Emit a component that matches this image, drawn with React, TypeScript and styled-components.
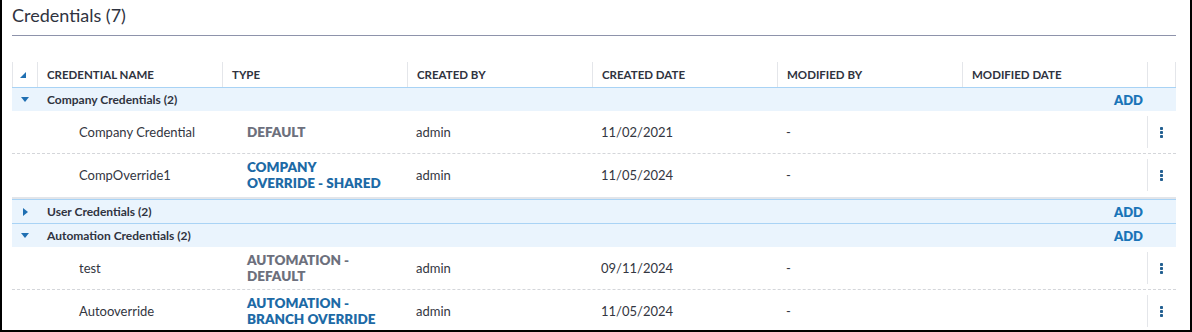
import React from "react";
import styled, { createGlobalStyle } from "styled-components";

const GlobalStyle = createGlobalStyle`
  html, body {
    margin: 0;
    padding: 0;
    background: #ffffff;
  }
  body {
    font-family: Lato, "Open Sans", Arial, sans-serif;
    color: #333641;
  }
`;

const COLS = "25px repeat(6, 185px) 1fr";

const Panel = styled.div`
  width: 1192px;
  height: 332px;
  box-sizing: border-box;
  border-left: 2px solid #000;
  border-right: 2px solid #000;
  border-bottom: 2px solid #000;
  padding: 0 14px 0 10px;
  overflow: hidden;
`;

const TitleBar = styled.div`
  height: 36px;
  box-sizing: border-box;
  border-bottom: 1px solid #8e93ab;
  display: flex;
  align-items: flex-start;
`;

const Title = styled.h2`
  margin: 3px 0 0 0;
  font-size: 18px;
  line-height: 24px;
  font-weight: 400;
  color: #2f3340;
`;

const Table = styled.div`
  margin-top: 26px;
`;

const HeaderRow = styled.div`
  display: grid;
  grid-template-columns: ${COLS};
  height: 25px;
`;

const HeaderCell = styled.div<{ $last?: boolean }>`
  display: flex;
  align-items: center;
  padding-left: 9px;
  font-size: 11.5px;
  font-weight: 700;
  text-transform: uppercase;
  color: #2f3340;
  border-left: 1px solid #e4e6ea;
  ${(p) => (p.$last ? "border-right: 1px solid #e4e6ea;" : "")}
`;

const SortCell = styled(HeaderCell)`
  padding-left: 7px;
`;

const GroupRow = styled.div`
  display: grid;
  grid-template-columns: 25px 1fr auto;
  height: 23px;
  background: #eaf4fd;
  border-top: 1px solid #a9d3f5;
  align-items: center;
`;

const Toggle = styled.div`
  display: flex;
  align-items: center;
  justify-content: center;
  padding-left: 1px;
`;

const GroupLabel = styled.div`
  padding-left: 10px;
  font-size: 12px;
  font-weight: 700;
  color: #2f3340;
`;

const AddButton = styled.button`
  background: none;
  border: none;
  padding: 0 33px 0 0;
  font-family: inherit;
  font-size: 13px;
  font-weight: 800;
  color: #1a74b8;
  cursor: pointer;
`;

const GroupBody = styled.div`
  padding-bottom: 1px;
  border-bottom: 2px solid #e2e5ea;
`;

const DataRow = styled.div<{ $last?: boolean }>`
  display: grid;
  grid-template-columns: ${COLS};
  height: 42px;
  border-bottom: ${(p) => (p.$last ? "none" : "1px dashed #d4d6da")};
  align-items: center;
`;

const Cell = styled.div<{ $pad?: number }>`
  padding-left: ${(p) => p.$pad ?? 9}px;
  font-size: 13px;
  color: #333641;
`;

const TypeCell = styled.div<{ $tone: "grey" | "blue" }>`
  padding-left: 25px;
  font-size: 13.5px;
  line-height: 16px;
  font-weight: 800;
  text-transform: uppercase;
  color: ${(p) => (p.$tone === "blue" ? "#1d6aa6" : "#6d707d")};
`;

const ActionCell = styled.div`
  align-self: stretch;
  margin: 5px 0;
  border-left: 1px solid #e4e6ea;
  display: flex;
  align-items: center;
  justify-content: center;
  padding-right: 1px;
`;

const SortIcon = () => (
  <svg width="6" height="6" viewBox="0 0 6 6">
    <polygon points="6,0 6,6 0,6" fill="#1f6fb2" />
  </svg>
);

const Caret = ({ open }: { open: boolean }) =>
  open ? (
    <svg width="8" height="5" viewBox="0 0 8 5">
      <polygon points="0,0 8,0 4,5" fill="#1f6fb2" />
    </svg>
  ) : (
    <svg width="5" height="8" viewBox="0 0 5 8">
      <polygon points="0,0 5,4 0,8" fill="#1f6fb2" />
    </svg>
  );

const Kebab = () => (
  <svg width="3" height="11" viewBox="0 0 3 11">
    <rect x="0" y="0" width="3" height="3" rx="0.8" fill="#225f91" />
    <rect x="0" y="4" width="3" height="3" rx="0.8" fill="#225f91" />
    <rect x="0" y="8" width="3" height="3" rx="0.8" fill="#225f91" />
  </svg>
);

type Cred = {
  name: string;
  type: string[];
  tone: "grey" | "blue";
  createdBy: string;
  createdDate: string;
  modifiedBy: string;
  modifiedDate: string;
};

type Group = { label: string; open: boolean; items: Cred[] };

const groups: Group[] = [
  {
    label: "Company Credentials (2)",
    open: true,
    items: [
      { name: "Company Credential", type: ["DEFAULT"], tone: "grey", createdBy: "admin", createdDate: "11/02/2021", modifiedBy: "-", modifiedDate: "" },
      { name: "CompOverride1", type: ["COMPANY", "OVERRIDE - SHARED"], tone: "blue", createdBy: "admin", createdDate: "11/05/2024", modifiedBy: "-", modifiedDate: "" },
    ],
  },
  { label: "User Credentials (2)", open: false, items: [] },
  {
    label: "Automation Credentials (2)",
    open: true,
    items: [
      { name: "test", type: ["AUTOMATION -", "DEFAULT"], tone: "grey", createdBy: "admin", createdDate: "09/11/2024", modifiedBy: "-", modifiedDate: "" },
      { name: "Autooverride", type: ["AUTOMATION -", "BRANCH OVERRIDE"], tone: "blue", createdBy: "admin", createdDate: "11/05/2024", modifiedBy: "-", modifiedDate: "" },
    ],
  },
];

const columns = ["Credential Name", "Type", "Created By", "Created Date", "Modified By", "Modified Date"];

export default function App() {
  return (
    <>
      <GlobalStyle />
      <Panel>
        <TitleBar>
          <Title>Credentials (7)</Title>
        </TitleBar>
        <Table>
          <HeaderRow>
            <SortCell>
              <SortIcon />
            </SortCell>
            {columns.map((c) => (
              <HeaderCell key={c}>{c}</HeaderCell>
            ))}
            <HeaderCell $last />
          </HeaderRow>
          {groups.map((g) => (
            <React.Fragment key={g.label}>
              <GroupRow>
                <Toggle>
                  <Caret open={g.open} />
                </Toggle>
                <GroupLabel>{g.label}</GroupLabel>
                <AddButton>ADD</AddButton>
              </GroupRow>
              {g.open && (
                <GroupBody>
                  {g.items.map((item, i) => (
                    <DataRow key={item.name} $last={i === g.items.length - 1}>
                      <div />
                      <Cell $pad={42}>{item.name}</Cell>
                      <TypeCell $tone={item.tone}>
                        {item.type.map((t) => (
                          <div key={t}>{t}</div>
                        ))}
                      </TypeCell>
                      <Cell>{item.createdBy}</Cell>
                      <Cell>{item.createdDate}</Cell>
                      <Cell>{item.modifiedBy}</Cell>
                      <Cell>{item.modifiedDate}</Cell>
                      <ActionCell>
                        <Kebab />
                      </ActionCell>
                    </DataRow>
                  ))}
                </GroupBody>
              )}
            </React.Fragment>
          ))}
        </Table>
      </Panel>
    </>
  );
}
